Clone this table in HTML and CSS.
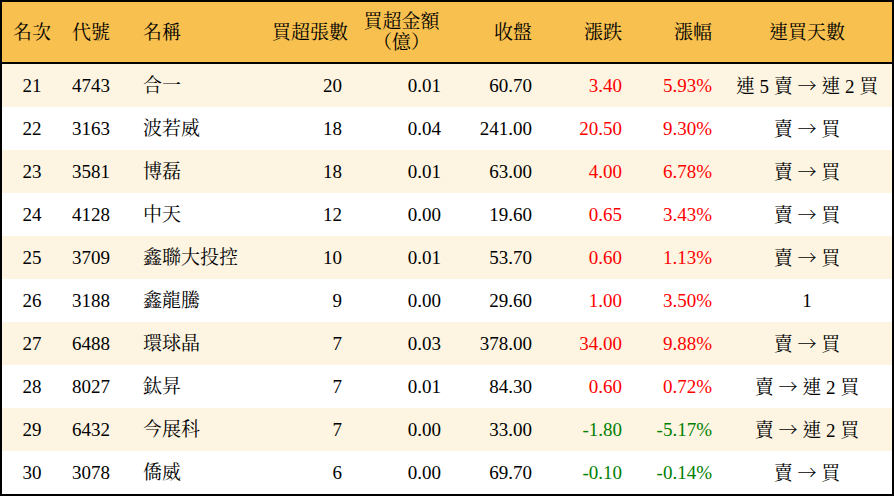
FILE: index.html
```html
<!DOCTYPE html>
<html lang="zh-Hant">
<head>
<meta charset="utf-8">
<title>買超排行</title>
<link rel="stylesheet" href="styles.css">
</head>
<body>
<div class="board">
<table class="rank">
<colgroup>
<col class="c-rank"><col class="c-code"><col class="c-name"><col class="c-vol"><col class="c-amt"><col class="c-close"><col class="c-chg"><col class="c-pct"><col class="c-days">
</colgroup>
<thead>
<tr>
<th class="center">名次</th>
<th class="left">代號</th>
<th class="left">名稱</th>
<th class="right">買超張數</th>
<th class="center">買超金額<br>（億）</th>
<th class="right">收盤</th>
<th class="right">漲跌</th>
<th class="right">漲幅</th>
<th class="center">連買天數</th>
</tr>
</thead>
<tbody>
<tr><td class="center">21</td><td class="left">4743</td><td class="left">合一</td><td class="right">20</td><td class="right">0.01</td><td class="right">60.70</td><td class="right up">3.40</td><td class="right up">5.93%</td><td class="center">連 5 賣 <span class="arrow">→</span> 連 2 買</td></tr>
<tr><td class="center">22</td><td class="left">3163</td><td class="left">波若威</td><td class="right">18</td><td class="right">0.04</td><td class="right">241.00</td><td class="right up">20.50</td><td class="right up">9.30%</td><td class="center">賣 <span class="arrow">→</span> 買</td></tr>
<tr><td class="center">23</td><td class="left">3581</td><td class="left">博磊</td><td class="right">18</td><td class="right">0.01</td><td class="right">63.00</td><td class="right up">4.00</td><td class="right up">6.78%</td><td class="center">賣 <span class="arrow">→</span> 買</td></tr>
<tr><td class="center">24</td><td class="left">4128</td><td class="left">中天</td><td class="right">12</td><td class="right">0.00</td><td class="right">19.60</td><td class="right up">0.65</td><td class="right up">3.43%</td><td class="center">賣 <span class="arrow">→</span> 買</td></tr>
<tr><td class="center">25</td><td class="left">3709</td><td class="left">鑫聯大投控</td><td class="right">10</td><td class="right">0.01</td><td class="right">53.70</td><td class="right up">0.60</td><td class="right up">1.13%</td><td class="center">賣 <span class="arrow">→</span> 買</td></tr>
<tr><td class="center">26</td><td class="left">3188</td><td class="left">鑫龍騰</td><td class="right">9</td><td class="right">0.00</td><td class="right">29.60</td><td class="right up">1.00</td><td class="right up">3.50%</td><td class="center">1</td></tr>
<tr><td class="center">27</td><td class="left">6488</td><td class="left">環球晶</td><td class="right">7</td><td class="right">0.03</td><td class="right">378.00</td><td class="right up">34.00</td><td class="right up">9.88%</td><td class="center">賣 <span class="arrow">→</span> 買</td></tr>
<tr><td class="center">28</td><td class="left">8027</td><td class="left">鈦昇</td><td class="right">7</td><td class="right">0.01</td><td class="right">84.30</td><td class="right up">0.60</td><td class="right up">0.72%</td><td class="center">賣 <span class="arrow">→</span> 連 2 買</td></tr>
<tr><td class="center">29</td><td class="left">6432</td><td class="left">今展科</td><td class="right">7</td><td class="right">0.00</td><td class="right">33.00</td><td class="right down">-1.80</td><td class="right down">-5.17%</td><td class="center">賣 <span class="arrow">→</span> 連 2 買</td></tr>
<tr><td class="center">30</td><td class="left">3078</td><td class="left">僑威</td><td class="right">6</td><td class="right">0.00</td><td class="right">69.70</td><td class="right down">-0.10</td><td class="right down">-0.14%</td><td class="center">賣 <span class="arrow">→</span> 買</td></tr>
</tbody>
</table>
</div>
</body>
</html>
```
FILE: styles.css
```css
html, body {
  margin: 0;
  padding: 0;
  background: #ffffff;
}
body {
  font-family: "Liberation Serif", "Noto Serif CJK TC", "Noto Sans CJK TC", serif;
  font-size: 19px;
  color: #000000;
}
.board {
  width: 894px;
  box-sizing: border-box;
  border: 2px solid #000000;
}
.rank {
  width: 100%;
  table-layout: fixed;
  border-collapse: separate;
  border-spacing: 0;
}
.c-rank { width: 60px; }
.c-code { width: 71px; }
.c-name { width: 129px; }
.c-vol { width: 90px; }
.c-amt { width: 99px; }
.c-close { width: 91px; }
.c-chg { width: 90px; }
.c-pct { width: 90px; }
.c-days { width: 170px; }
.rank th {
  background: #f8c04f;
  font-weight: normal;
  height: 62px;
  padding: 0 10px;
  line-height: 21px;
  border-bottom: 2px solid #000000;
  box-sizing: border-box;
  white-space: nowrap;
}
.rank td {
  height: 43px;
  padding: 0 10px;
  line-height: 22px;
  white-space: nowrap;
  box-sizing: border-box;
}
.rank tbody tr:nth-child(odd) td {
  background: #fdf5e2;
}
.rank tbody tr:nth-child(even) td {
  background: #ffffff;
}
.center { text-align: center; }
.left { text-align: left; }
.right { text-align: right; }
.up { color: #ff0000; }
.down { color: #008000; }
.arrow {
  font-family: "Noto Serif CJK TC", "Noto Sans CJK TC", "DejaVu Serif", serif;
}
```
